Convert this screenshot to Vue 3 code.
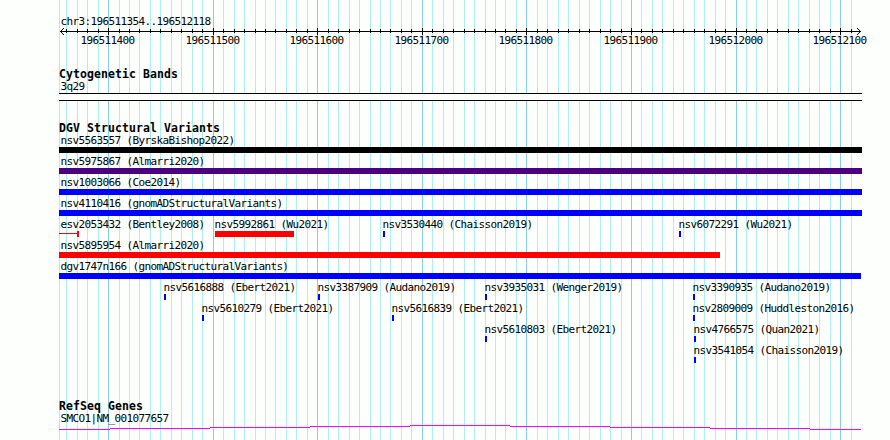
<template>
  <div class="browser">
    <svg class="grid" width="890" height="440" shape-rendering="crispEdges">
      <rect
        v-for="line in gridLines"
        :key="line.x"
        :x="line.x"
        y="0"
        width="1"
        height="440"
        :class="line.major ? 'grid-major' : 'grid-minor'"
      />
    </svg>

    <header class="ruler">
      <div class="label region">chr3:196511354..196512118</div>
      <svg class="axis" width="890" height="8" shape-rendering="crispEdges">
        <rect x="60" y="4" width="801" height="1" />
        <rect
          v-for="tick in ticks"
          :key="tick.x"
          :x="tick.x"
          :y="tick.major ? 1 : 2"
          width="1"
          :height="tick.major ? 7 : 4"
        />
        <path d="M61 3h1v1h-1zM62 2h1v1h-1zM63 1h1v1h-1zM61 5h1v1h-1zM62 6h1v1h-1zM63 7h1v1h-1z" />
        <path d="M859 3h1v1h-1zM858 2h1v1h-1zM857 1h1v1h-1zM859 5h1v1h-1zM858 6h1v1h-1zM857 7h1v1h-1z" />
      </svg>
      <div class="positions">
        <span
          v-for="tick in majorTicks"
          :key="tick.pos"
          class="label position"
          :style="{ left: `${tick.x - 28}px` }"
        >{{ tick.pos }}</span>
      </div>
    </header>

    <section class="track bands">
      <h2>Cytogenetic Bands</h2>
      <div class="label">3q29</div>
      <div class="band"></div>
    </section>

    <section class="track variants">
      <h2>DGV Structural Variants</h2>
      <div v-for="(row, i) in rows" :key="i" class="row">
        <div
          v-for="item in row"
          :key="item.name"
          class="feature"
          :style="{ left: `${item.x}px` }"
        >
          <span class="label name" :class="{ edge: item.x === 59 }">{{ item.name }}</span>
          <div
            class="bar"
            :class="[item.color, { partial: item.partial }]"
            :style="{ width: `${item.w}px` }"
          ></div>
        </div>
      </div>
    </section>

    <section class="track genes">
      <h2>RefSeq Genes</h2>
      <div class="label">SMCO1|NM_001077657</div>
      <svg class="intron" width="890" height="6" shape-rendering="crispEdges">
        <rect
          v-for="step in intronSteps"
          :key="step.x"
          :x="step.x"
          :y="step.y"
          :width="step.w"
          height="1"
        />
      </svg>
    </section>
  </div>
</template>

<script setup>
const START = 196511354
const END = 196512118
const PAD = 60
const scale = 800 / (END - START + 1)

const toX = (pos) => PAD + Math.round((pos - START) * scale)

// One tick every 10 bp, a major one every 100 bp
const ticks = []
for (let pos = 196511360; pos <= END; pos += 10) {
  ticks.push({ pos, x: toX(pos), major: pos % 100 === 0 })
}
const majorTicks = ticks.filter((t) => t.major)
const gridLines = [{ x: 59, major: false }, ...ticks]

const rows = [
  [{ name: 'nsv5563557 (ByrskaBishop2022)', x: 59, w: 803, color: 'black' }],
  [{ name: 'nsv5975867 (Almarri2020)', x: 59, w: 803, color: 'indigo' }],
  [{ name: 'nsv1003066 (Coe2014)', x: 59, w: 803, color: 'blue' }],
  [{ name: 'nsv4110416 (gnomADStructuralVariants)', x: 59, w: 803, color: 'blue' }],
  [
    { name: 'esv2053432 (Bentley2008)', x: 59, w: 20, color: 'red', partial: true },
    { name: 'nsv5992861 (Wu2021)', x: 215, w: 79, color: 'red' },
    { name: 'nsv3530440 (Chaisson2019)', x: 383, w: 2, color: 'blue' },
    { name: 'nsv6072291 (Wu2021)', x: 679, w: 2, color: 'blue' }
  ],
  [{ name: 'nsv5895954 (Almarri2020)', x: 59, w: 661, color: 'red' }],
  [{ name: 'dgv1747n166 (gnomADStructuralVariants)', x: 59, w: 802, color: 'blue' }],
  [
    { name: 'nsv5616888 (Ebert2021)', x: 164, w: 2, color: 'blue' },
    { name: 'nsv3387909 (Audano2019)', x: 318, w: 2, color: 'blue' },
    { name: 'nsv3935031 (Wenger2019)', x: 485, w: 2, color: 'blue' },
    { name: 'nsv3390935 (Audano2019)', x: 693, w: 2, color: 'blue' }
  ],
  [
    { name: 'nsv5610279 (Ebert2021)', x: 202, w: 2, color: 'blue' },
    { name: 'nsv5616839 (Ebert2021)', x: 392, w: 2, color: 'blue' },
    { name: 'nsv2809009 (Huddleston2016)', x: 693, w: 2, color: 'blue' }
  ],
  [
    { name: 'nsv5610803 (Ebert2021)', x: 485, w: 2, color: 'blue' },
    { name: 'nsv4766575 (Quan2021)', x: 694, w: 2, color: 'blue' }
  ],
  [{ name: 'nsv3541054 (Chaisson2019)', x: 694, w: 2, color: 'blue' }]
]

// The intron rises one pixel per step up to the middle, then falls again
const edges = [59, 110, 210, 310, 410, 510, 610, 710, 810, 861]
const intronSteps = edges.slice(0, -1).map((x, i) => ({
  x,
  w: edges[i + 1] - x,
  y: Math.abs(4 - i)
}))
</script>

<style>
body {
  margin: 0;
  background: #fdfffc;
}
</style>

<style scoped>
.browser {
  position: relative;
  width: 890px;
  height: 440px;
  overflow: hidden;
  background: #fdfffc;
  color: #000;
  font-family: 'DejaVu Sans Mono', monospace;
}

.grid {
  position: absolute;
  top: 0;
  left: 0;
}

.grid-minor {
  fill: #afeeee;
}

.grid-major {
  fill: #87ceeb;
}

.label {
  font-size: 11px;
  line-height: 14px;
  height: 12px;
  letter-spacing: -0.623px;
  text-indent: 0.4px;
  white-space: pre;
}

.ruler {
  position: relative;
  height: 53px;
  padding-top: 15px;
}

.region {
  padding-left: 60px;
}

.axis {
  display: block;
}

.positions {
  position: relative;
  height: 12px;
  margin-top: -1px;
}

.position {
  position: absolute;
  top: 0;
}

.track {
  position: relative;
}

.track > .label {
  padding-left: 60px;
}

h2 {
  margin: 0;
  padding-left: 59px;
  height: 12px;
  font-size: 11.5px;
  line-height: 12px;
  font-weight: bold;
  letter-spacing: 0.077px;
  white-space: pre;
}

.bands {
  height: 54px;
}

.band {
  box-sizing: border-box;
  width: 803px;
  height: 8px;
  margin: 1px 0 0 59px;
  border: solid #000;
  border-width: 1px 0;
  background: #fdfffc;
}

.variants {
  height: 278px;
}

.row {
  position: relative;
  height: 21px;
}

/* Features sit at their genomic coordinate */
.feature {
  position: absolute;
  top: 0;
}

.name {
  display: block;
  width: 0;
  margin: 0 0 1px -1px;
}

.name.edge {
  margin-left: 1px;
}

.bar {
  height: 6px;
}

.black {
  background: #000;
}

.indigo {
  background: #4b0082;
}

.blue {
  background: #00f;
}

.red {
  background: #f00;
}

/* Thin line that ends in a short box */
.partial {
  background:
    linear-gradient(#f00, #f00) right top / 2px 6px no-repeat,
    linear-gradient(#f00, #f00) left 2px / 100% 1px no-repeat;
}

.intron {
  display: block;
  margin-top: 1px;
  fill: #f0f;
}
</style>
